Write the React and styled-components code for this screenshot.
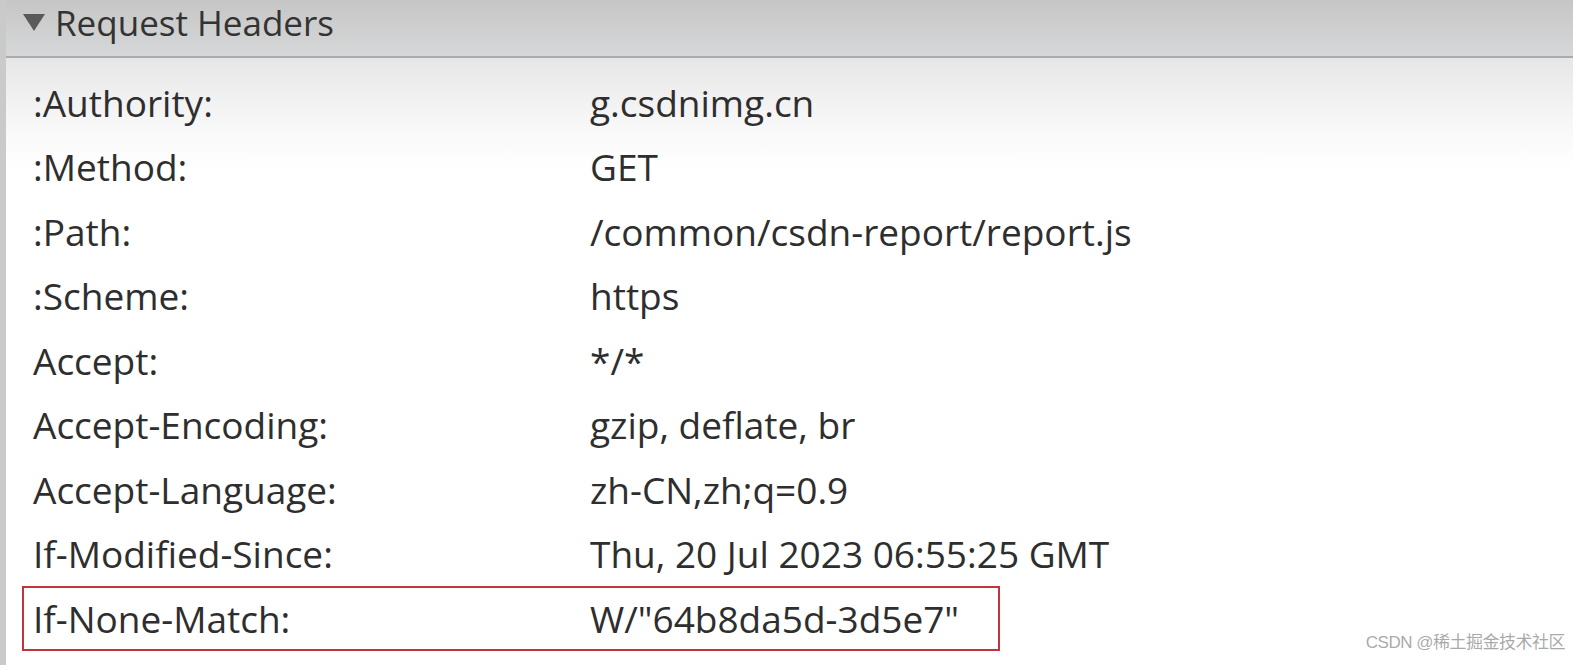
import React from "react";
import styled, { createGlobalStyle } from "styled-components";

const colors = {
  text: "#2e2e2e",
  headerTop: "#c6c6c6",
  headerBottom: "#d6d7d8",
  headerLine: "#a9abad",
  sideBar: "#cacaca",
  highlight: "#c3323d",
};

const fonts = {
  primary: "'Open Sans', 'Noto Sans', 'Noto Sans CJK SC', sans-serif",
};

const GlobalStyle = createGlobalStyle`
  html, body {
    margin: 0;
    padding: 0;
    background: #ffffff;
  }
  body {
    font-family: ${fonts.primary};
    color: ${colors.text};
    overflow: hidden;
  }
`;

const Page = styled.div`
  width: 1573px;
  height: 665px;
  display: flex;
  overflow: hidden;
  position: relative;
  background: #ffffff;
`;

const SideBar = styled.div`
  width: 6px;
  flex: none;
  background: ${colors.sideBar};
`;

const Panel = styled.div`
  flex: 1;
  display: flex;
  flex-direction: column;
`;

const SectionHeader = styled.div`
  height: 46px;
  display: flex;
  align-items: center;
  padding: 0 0 10px 16px;
  gap: 9px;
  background: linear-gradient(180deg, ${colors.headerTop} 0%, ${colors.headerBottom} 100%);
  border-bottom: 2px solid ${colors.headerLine};
`;

const Triangle = styled.svg`
  width: 24px;
  height: 20px;
  flex: none;
  margin-top: -2px;
`;

const HeaderTitle = styled.span`
  font-size: 35px;
  line-height: 36px;
  color: #333;
`;

const Body = styled.div`
  flex: 1;
  padding-top: 12px;
  background: linear-gradient(180deg, #e6e6e6 0px, #f6f6f6 60px, #ffffff 110px);
`;

const Row = styled.div`
  width: 978px;
  height: 64.5px;
  margin-left: 16px;
  box-sizing: border-box;
  display: flex;
  align-items: center;
  padding-left: 9px;
  border: 2px solid ${(p) => (p.$marked ? colors.highlight : "transparent")};
  font-size: 37px;
`;

const Label = styled.span`
  width: 557px;
  flex: none;
  white-space: nowrap;
`;

const Value = styled.span`
  white-space: nowrap;
`;

const Watermark = styled.div`
  position: absolute;
  right: 8px;
  bottom: 12px;
  font-size: 17px;
  font-family: "Liberation Sans", "Noto Sans CJK SC", sans-serif;
  color: rgba(130, 130, 130, 0.7);
  letter-spacing: -0.5px;
`;

const headers = [
  [":Authority:", "g.csdnimg.cn"],
  [":Method:", "GET"],
  [":Path:", "/common/csdn-report/report.js"],
  [":Scheme:", "https"],
  ["Accept:", "*/*"],
  ["Accept-Encoding:", "gzip, deflate, br"],
  ["Accept-Language:", "zh-CN,zh;q=0.9"],
  ["If-Modified-Since:", "Thu, 20 Jul 2023 06:55:25 GMT"],
  ["If-None-Match:", 'W/"64b8da5d-3d5e7"'],
];

export default function App() {
  return (
    <>
      <GlobalStyle />
      <Page>
        <SideBar />
        <Panel>
          <SectionHeader>
            <Triangle viewBox="0 0 24 20">
              <path d="M1 2 L23 2 L12 19 Z" fill="#5a5a5a" />
            </Triangle>
            <HeaderTitle>Request Headers</HeaderTitle>
          </SectionHeader>
          <Body>
            {headers.map(([k, v]) => (
              <Row key={k} $marked={k === "If-None-Match:"}>
                <Label>{k}</Label>
                <Value>{v}</Value>
              </Row>
            ))}
          </Body>
        </Panel>
        <Watermark>CSDN @稀土掘金技术社区</Watermark>
      </Page>
    </>
  );
}
